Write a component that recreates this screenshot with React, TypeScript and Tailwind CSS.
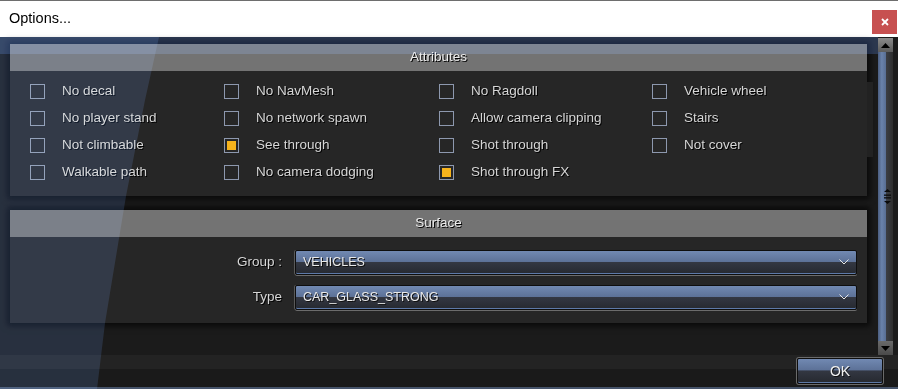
import React from 'react';

const rows: (string | null)[][] = [
  ['No decal', 'No NavMesh', 'No Ragdoll', 'Vehicle wheel'],
  ['No player stand', 'No network spawn', 'Allow camera clipping', 'Stairs'],
  ['Not climbable', 'See through', 'Shot through', 'Not cover'],
  ['Walkable path', 'No camera dodging', 'Shot through FX', null],
];

const checked = ['See through', 'Shot through FX'];

const Check = ({ label }: { label: string }) => {
  const on = checked.includes(label);
  return (
    <div className="flex items-center gap-[17px]">
      <div className="w-[15px] h-[15px] border border-[#8d98ae] p-[2px] shrink-0">
        {on && <div className="w-full h-full bg-[#f6b31c]" />}
      </div>
      <span className="text-[13.5px] text-[#d6d6d6] [text-shadow:1px_1px_0_#000] whitespace-nowrap">{label}</span>
    </div>
  );
};

const PanelHeader = ({ title }: { title: string }) => (
  <div className="h-[27px] bg-[#737373] flex items-center justify-center text-[13.5px] text-[#ececec] [text-shadow:1px_1px_0_#000]">
    {title}
  </div>
);

const Dropdown = ({ value }: { value: string }) => (
  <div className="flex-1 h-[25px] flex items-center justify-between pl-[7px] pr-[7px] border border-[#0e0e0e] rounded-[2px] bg-[linear-gradient(to_bottom,#7189b2_0%,#5d7298_46%,#333742_50%,#262930_100%)] shadow-[inset_0_-1px_0_#5d79a8,0_1px_0_#6c6c6c,-1px_0_0_#5a5a5a]">
    <span className="text-[12.5px] text-[#eaeaea] [text-shadow:1px_1px_0_#111]">{value}</span>
    <svg width="10" height="6" viewBox="0 0 10 6" className="-mt-[2px]">
      <polyline points="0.5,0.5 5,5 9.5,0.5" fill="none" stroke="#e6e6e6" strokeWidth="1" />
    </svg>
  </div>
);

export default function App() {
  return (
    <div className="w-[898px] h-[389px] overflow-hidden bg-white font-['Liberation_Sans',Arial,sans-serif]">
      {/* Title bar */}
      <div className="h-[37px] border-t border-[#6e6e6e] flex items-center justify-between pl-[9px] pr-[1px]">
        <span className="text-[14.5px] text-black">Options...</span>
        <button className="w-[25px] h-[24px] mt-[6px] bg-[#c75050] flex items-center justify-center">
          <svg width="8" height="8" viewBox="0 0 8 8">
            <path d="M1 1L7 7M7 1L1 7" stroke="#fff" strokeWidth="1.8" />
          </svg>
        </button>
      </div>

      {/* Client area */}
      <div className="relative h-[352px] bg-[#1b1b1b] flex flex-col">
        <div className="h-[318px] flex">
          <div className="w-[878px] pl-[10px] pt-[7px] flex flex-col gap-[14px]">
            {/* Attributes */}
            <div className="flex items-start">
              <div className="w-[857px] shadow-[0_0_6px_3px_rgba(0,0,0,0.7)]">
                <PanelHeader title="Attributes" />
                <div className="bg-[#262626] pl-[20px] pt-[7px] pb-[10px] grid grid-cols-[194px_215px_213px_1fr] auto-rows-[27px]">
                  {rows.flat().map((label, i) => (
                    <div key={i} className="flex items-center">
                      {label && <Check label={label} />}
                    </div>
                  ))}
                </div>
              </div>
              <div className="w-[6px] h-[75px] mt-[38px] bg-[#222222]" />
            </div>

            {/* Surface */}
            <div className="w-[857px] shadow-[0_0_6px_3px_rgba(0,0,0,0.7)]">
              <PanelHeader title="Surface" />
              <div className="bg-[#262626] pt-[13px] pb-[13px] pr-[10px] flex flex-col gap-[10px]">
                <div className="flex items-center gap-[13px]">
                  <span className="w-[272px] text-right text-[13.5px] text-[#d6d6d6] [text-shadow:1px_1px_0_#000]">Group :</span>
                  <Dropdown value="VEHICLES" />
                </div>
                <div className="flex items-center gap-[13px]">
                  <span className="w-[272px] text-right text-[13.5px] text-[#d6d6d6] [text-shadow:1px_1px_0_#000]">Type</span>
                  <Dropdown value="CAR_GLASS_STRONG" />
                </div>
              </div>
            </div>
          </div>

          {/* Scrollbar */}
          <div className="w-[15px] pt-[1px] flex flex-col">
            <div className="h-[14px] bg-[linear-gradient(to_bottom,#8b8b8b,#5c5c5c)] flex items-center justify-center">
              <svg width="9" height="5" viewBox="0 0 9 5"><polygon points="4.5,0 9,5 0,5" fill="#000" /></svg>
            </div>
            <div className="flex-1 flex items-center justify-end pr-[2px] bg-[linear-gradient(to_right,#4b5e80_0%,#6a82ab_25%,#5a7096_50%,#3b3d43_56%,#2d2d2d_100%)]">
              <svg width="7" height="15" viewBox="0 0 7 15">
                <polygon points="3.5,0 7,3 0,3" fill="#0a0a0a" />
                <rect x="0" y="5.5" width="7" height="1.3" fill="#0a0a0a" />
                <rect x="0" y="8.2" width="7" height="1.3" fill="#0a0a0a" />
                <polygon points="0,12 7,12 3.5,15" fill="#0a0a0a" />
              </svg>
            </div>
            <div className="h-[14px] bg-[linear-gradient(to_bottom,#6a6a6a,#4a4a4a)] flex items-center justify-center">
              <svg width="9" height="5" viewBox="0 0 9 5"><polygon points="0,0 9,0 4.5,5" fill="#000" /></svg>
            </div>
          </div>
        </div>

        {/* Footer */}
        <div className="flex-1 flex flex-col">
          <div className="flex-1 flex bg-[linear-gradient(to_bottom,#232323_0,#232323_14px,#1a1a1a_14px)]">
            <button className="ml-auto mr-[15px] mt-[3px] w-[86px] h-[26px] border border-[#0e0e0e] rounded-[2px] bg-[linear-gradient(to_bottom,#7189b2_0%,#5d7298_45%,#333742_50%,#262930_100%)] shadow-[inset_0_-1px_0_#5d79a8,0_0_0_1px_#6a6a6a] text-[14px] text-[#f0f0f0] [text-shadow:1px_1px_0_#111]">
              OK
            </button>
          </div>
          <div className="h-[2px] bg-[#46546b]" />
        </div>

        {/* Window gloss */}
        <div className="absolute top-0 left-0 w-[878px] h-[17px] bg-[#13203a] mix-blend-screen pointer-events-none" />
        <div className="absolute inset-0 bg-[#0f1828] mix-blend-screen pointer-events-none [clip-path:polygon(0_0,159px_0,145px_63px,126px_159px,105px_286px,97px_352px,0_352px)]" />
      </div>
    </div>
  );
}
